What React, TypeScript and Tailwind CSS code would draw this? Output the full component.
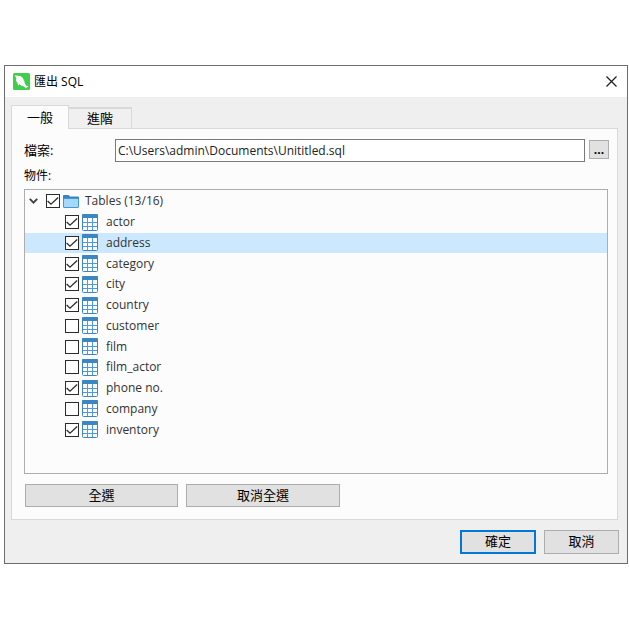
import React, { useState } from 'react';
import clsx from 'clsx';

interface TableItem {
    name: string;
    checked: boolean;
}

const TABLES: TableItem[] = [
    { name: 'actor', checked: true },
    { name: 'address', checked: true },
    { name: 'category', checked: true },
    { name: 'city', checked: true },
    { name: 'country', checked: true },
    { name: 'customer', checked: false },
    { name: 'film', checked: false },
    { name: 'film_actor', checked: false },
    { name: 'phone no.', checked: true },
    { name: 'company', checked: false },
    { name: 'inventory', checked: true },
];

const AppLogo = () => (
    <svg width="17" height="17" viewBox="0 0 17 17" aria-hidden="true">
        <rect width="17" height="17" rx="1.5" fill="#3fcf4c" />
        <path
            d="M1.6 2.6 L4.6 2.8 Q8 2.6 9.8 5 Q11.4 7.4 11.8 10.6 L13 12.4 L15.8 13.6 L13.8 14.2 L13 15.6 L11 13.4 Q8.4 13 6.4 11.2 L5.2 12.8 L4.4 9.8 Q2.4 7.8 3.2 4.8 Z"
            fill="#fff"
        />
        <path d="M5 5.2 L7.5 8.6 L10.6 11.2" stroke="#d3f5d6" strokeWidth="0.8" fill="none" />
    </svg>
);

const CloseIcon = () => (
    <svg width="11" height="11" viewBox="0 0 11 11" aria-hidden="true">
        <path d="M0.5 0.5 L10.5 10.5 M10.5 0.5 L0.5 10.5" stroke="#1a1a1a" strokeWidth="1.2" />
    </svg>
);

const ChevronIcon = () => (
    <svg width="9" height="6" viewBox="0 0 9 6" aria-hidden="true">
        <path d="M0.8 0.8 L4.5 4.6 L8.2 0.8" stroke="#404040" strokeWidth="1.9" fill="none" />
    </svg>
);

const FolderIcon = () => (
    <svg width="16" height="13" viewBox="0 0 16 13" aria-hidden="true">
        <path d="M0 1 Q0 0 1 0 H5.5 L7 1.5 H15 Q16 1.5 16 2.5 V6 H0 Z" fill="#3a85bf" />
        <rect x="0.5" y="3.5" width="15" height="9" rx="0.5" fill="#a5d8ff" stroke="#4596d1" />
    </svg>
);

const TableIcon = () => (
    <svg width="16" height="17" viewBox="0 0 16 17" aria-hidden="true">
        <rect x="0.5" y="0.5" width="15" height="16" rx="1" fill="#fff" stroke="#3c87c2" />
        <path d="M1 0 H15 Q16 0 16 1 V4 H0 V1 Q0 0 1 0 Z" fill="#3c87c2" />
        <path d="M5.5 4 V16 M10.5 4 V16 M1 8.5 H15 M1 12.5 H15" stroke="#4a9cdb" />
    </svg>
);

interface CheckboxProps {
    id: string;
    checked: boolean;
    onChange: () => void;
}

const Checkbox: React.FC<CheckboxProps> = ({ id, checked, onChange }) => (
    <span className="relative flex size-3.5 shrink-0">
        <input
            id={id}
            type="checkbox"
            checked={checked}
            onChange={onChange}
            className="peer size-3.5 appearance-none border border-[#2b2b2b] bg-white"
        />
        <svg
            className="pointer-events-none absolute inset-0 hidden peer-checked:block"
            width="14"
            height="14"
            viewBox="0 0 14 14"
            aria-hidden="true"
        >
            <path d="M1.6 7 L5 10.2 L12.2 3.6" stroke="#2b2b2b" strokeWidth="1.3" fill="none" />
        </svg>
    </span>
);

const buttonClass = 'border border-[#adadad] bg-[#e1e1e1] text-center';

const App = () => {
    const [path, setPath] = useState('C:\\Users\\admin\\Documents\\Unititled.sql');
    const [tables, setTables] = useState(TABLES);
    const [rootChecked, setRootChecked] = useState(true);
    const [selected, setSelected] = useState('address');

    const toggle = (name: string) => {
        setTables(tables.map((t) => (t.name === name ? { ...t, checked: !t.checked } : t)));
    };

    const setAll = (checked: boolean) => {
        setRootChecked(checked);
        setTables(tables.map((t) => ({ ...t, checked })));
    };

    return (
        <div className="min-h-screen bg-white pt-[65px] pr-px pl-1 font-['Open_Sans','Noto_Sans_CJK_TC',sans-serif] text-xs text-black">
            <div role="dialog" aria-labelledby="title" className="border border-[#6e6c6e] bg-[#efefef]">
                <header className="flex h-[31px] items-center bg-white pr-2.5 pl-2">
                    <AppLogo />
                    <h1 id="title" className="ml-1">匯出 SQL</h1>
                    <button aria-label="關閉" className="ml-auto">
                        <CloseIcon />
                    </button>
                </header>

                <div className="pt-2 pr-2 pb-[9px] pl-1.5">
                    <div role="tablist" className="flex items-end">
                        <button
                            role="tab"
                            aria-selected="true"
                            className="z-10 -mb-px h-6 w-[58px] border border-b-0 border-[#d9d9d9] bg-[#fcfcfc] text-[13px]"
                        >
                            一般
                        </button>
                        <button
                            role="tab"
                            aria-selected="false"
                            className="-ml-px h-[21px] w-16 border border-t-2 border-b-0 border-[#d9d9d9] bg-[#f0f0f0] text-[13px]"
                        >
                            進階
                        </button>
                    </div>

                    <div role="tabpanel" className="mr-px border border-[#d9d9d9] bg-[#fcfcfc] pt-2.5 pr-2 pb-3 pl-3">
                        <div className="flex items-center">
                            <label htmlFor="file" className="w-[91px] shrink-0 text-[13px]">檔案:</label>
                            <input
                                id="file"
                                type="text"
                                value={path}
                                onChange={(e) => setPath(e.target.value)}
                                className="h-[23px] min-w-0 flex-1 border border-[#7a7a7a] bg-white px-0.5 text-[#222]"
                            />
                            <button
                                aria-label="瀏覽"
                                className={clsx(buttonClass, 'mb-0.5 ml-1 h-[19px] w-5 leading-4 font-bold')}
                            >
                                ...
                            </button>
                        </div>

                        <p id="objects" className="mt-1 h-[23px] leading-5">物件:</p>

                        <ul
                            aria-labelledby="objects"
                            className="mr-px grid h-[285px] grid-rows-[repeat(12,minmax(0,1fr))] border border-[#adadad] bg-[#fcfcfc] pt-px pb-[33px] text-[#333]"
                        >
                            <li className="flex items-center pl-1">
                                <button aria-label="收合" className="mr-2">
                                    <ChevronIcon />
                                </button>
                                <Checkbox id="root" checked={rootChecked} onChange={() => setAll(!rootChecked)} />
                                <label htmlFor="root" className="ml-[3px] flex items-center gap-1.5">
                                    <FolderIcon />
                                    Tables (13/16)
                                </label>
                            </li>
                            {tables.map((t) => (
                                <li
                                    key={t.name}
                                    onClick={() => setSelected(t.name)}
                                    className={clsx('flex items-center pl-10', t.name === selected && 'bg-[#cce8ff]')}
                                >
                                    <Checkbox id={t.name} checked={t.checked} onChange={() => toggle(t.name)} />
                                    <label htmlFor={t.name} className="ml-[3px] flex items-center gap-2">
                                        <TableIcon />
                                        {t.name}
                                    </label>
                                </li>
                            ))}
                        </ul>

                        <div className="mt-2.5 flex gap-2 pl-px">
                            <button onClick={() => setAll(true)} className={clsx(buttonClass, 'h-[23px] w-[153px] text-[13px]')}>
                                全選
                            </button>
                            <button onClick={() => setAll(false)} className={clsx(buttonClass, 'h-[23px] w-[154px] text-[13px]')}>
                                取消全選
                            </button>
                        </div>
                    </div>

                    <footer className="mt-2.5 flex justify-end gap-2">
                        <button className="h-6 w-[76px] border-2 border-[#0078d7] bg-[#e1e1e1] text-[13px]">確定</button>
                        <button className={clsx(buttonClass, 'h-6 w-[75px] text-[13px]')}>取消</button>
                    </footer>
                </div>
            </div>
        </div>
    );
};

export default App;
